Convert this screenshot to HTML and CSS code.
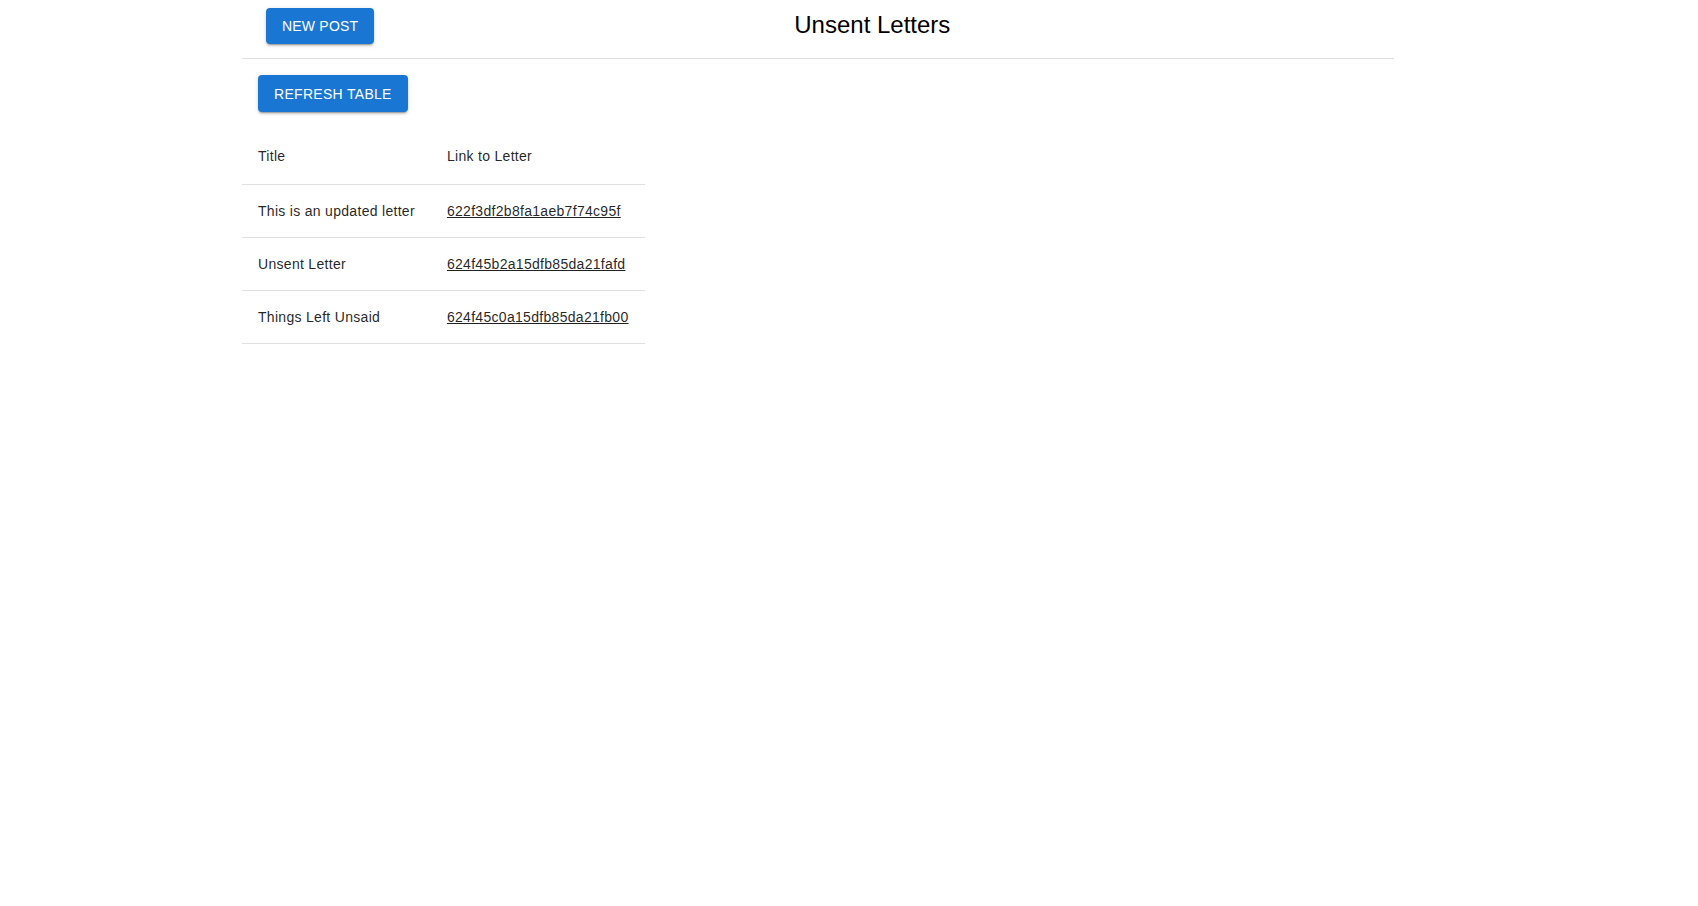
FILE: index.html
```html
<!DOCTYPE html>
<html>
<head>
<meta charset="utf-8">
<title>Unsent Letters</title>
<link rel="stylesheet" href="styles.css">
</head>
<body>
<div class="page">
  <header class="topbar">
    <button class="btn">New Post</button>
    <h1 class="title">Unsent Letters</h1>
  </header>
  <main class="content">
    <button class="btn">Refresh Table</button>
    <table class="letters">
      <thead>
        <tr><th>Title</th><th>Link to Letter</th></tr>
      </thead>
      <tbody>
        <tr><td>This is an updated letter</td><td><a href="#">622f3df2b8fa1aeb7f74c95f</a></td></tr>
        <tr><td>Unsent Letter</td><td><a href="#">624f45b2a15dfb85da21fafd</a></td></tr>
        <tr><td>Things Left Unsaid</td><td><a href="#">624f45c0a15dfb85da21fb00</a></td></tr>
      </tbody>
    </table>
  </main>
</div>
</body>
</html>
```

FILE: styles.css
```css
* { box-sizing: border-box; }
html, body { margin: 0; padding: 0; background: #fff; }
body {
  font-family: "Liberation Sans", Arial, Helvetica, sans-serif;
  color: rgba(0,0,0,0.87);
}
.page {
  width: 1152px;
  margin-left: 242px;
}
.topbar {
  display: flex;
  align-items: center;
  height: 59px;
  padding: 0 0 7px 24px;
  border-bottom: 1px solid #e0e0e0;
}
.title {
  margin: 0 0 0 420px;
  font-family: "Liberation Sans", Arial, sans-serif;
  font-weight: 400;
  font-size: 24px;
  color: #000;
  line-height: 1.2;
}
.btn {
  display: inline-block;
  height: 36px;
  padding: 0 16px;
  border: 0;
  border-radius: 4px;
  background: #1976d2;
  color: #fff;
  font-family: "Liberation Sans", Arial, sans-serif;
  font-size: 14px;
  font-weight: 400;
  letter-spacing: 0.2px;
  text-transform: uppercase;
  box-shadow: 0 3px 1px -2px rgba(0,0,0,0.2), 0 2px 2px 0 rgba(0,0,0,0.14), 0 1px 5px 0 rgba(0,0,0,0.12);
  cursor: pointer;
}
.content {
  padding-top: 16px;
}
.content .btn {
  margin-left: 16px;
  height: 37px;
  letter-spacing: 0.3px;
}
.letters {
  margin-top: 16px;
  border-collapse: collapse;
  font-size: 14px;
  letter-spacing: 0.3px;
}
.letters th, .letters td {
  text-align: left;
  padding: 16px;
  border-bottom: 1px solid #e0e0e0;
  font-weight: 400;
  color: rgba(0,0,0,0.87);
}
.letters th { line-height: 24px; }
.letters td { line-height: 20px; }
.letters a { color: rgba(0,0,0,0.87); text-decoration: underline; }
```
